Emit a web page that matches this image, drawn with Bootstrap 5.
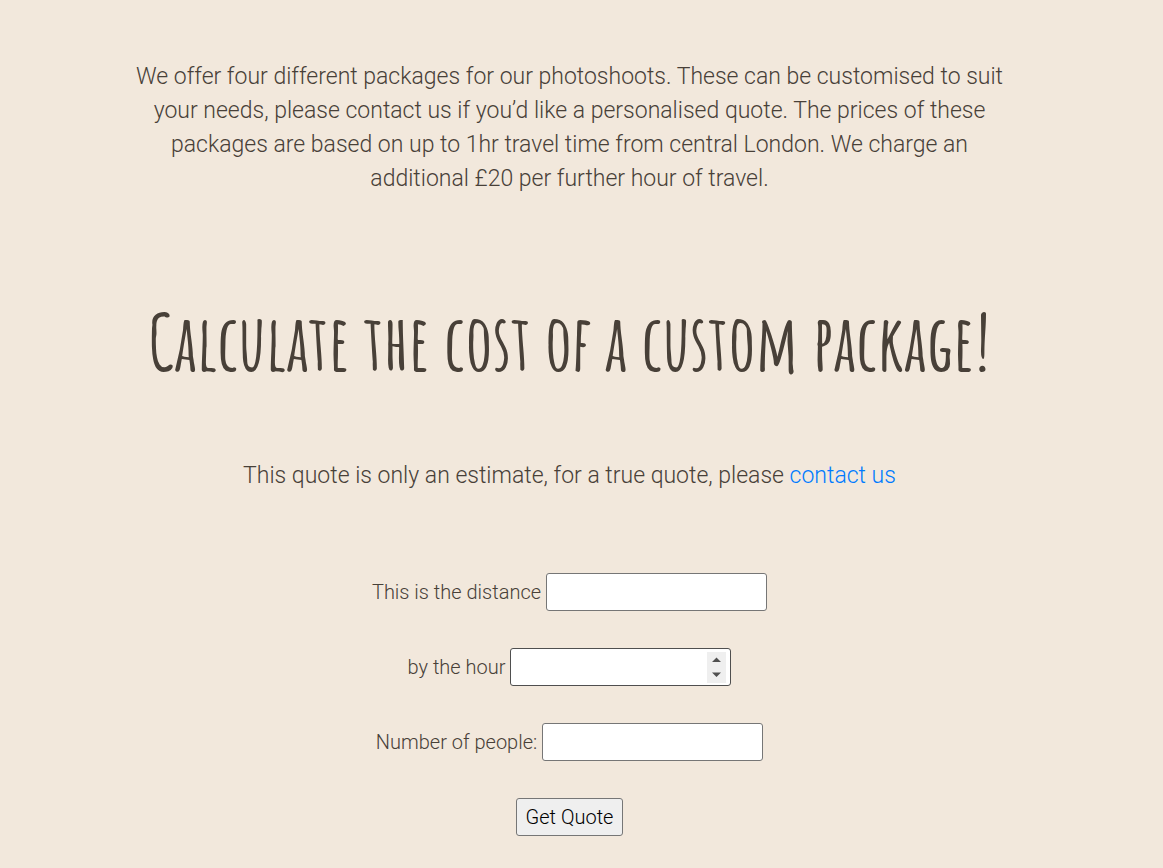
<!DOCTYPE html>
<html lang="en">
<head>
<meta charset="utf-8">
<meta name="viewport" content="width=device-width, initial-scale=1">
<title>Custom packages</title>
<link href="https://cdn.jsdelivr.net/npm/bootstrap@5.3.0/dist/css/bootstrap.min.css" rel="stylesheet">
<style>
body{background:#f2e8dc;color:#484038;font-family:Roboto,"Open Sans",sans-serif;font-weight:300;font-size:20px;line-height:30px}
.page{padding:60px 152px 34px 128px}
.copy{font-size:23px;line-height:34px}
.copy a{color:#007bff;text-decoration:none}
.headline{font-family:"Amatic SC","Liberation Sans Narrow",sans-serif;font-weight:700;font-size:76px;line-height:92px;margin:100px 0 71px}
.quote-form{margin-top:80px;gap:37px}
.form-line{gap:5px}
.field{width:221px;height:38px;border:1px solid #767676;border-radius:3px;background:#fff;padding:2px 4px}
.field[type=number]{border-color:#4f4f4f}
.field::-webkit-inner-spin-button{-webkit-appearance:none;opacity:1;width:19px;height:31px;background:#efefef url("data:image/svg+xml,%3Csvg xmlns='http://www.w3.org/2000/svg' width='19' height='31'%3E%3Cpath d='M5 10L9.5 5.5L14 10ZM5 20.5H14L9.5 25Z' fill='%23505050'/%3E%3C/svg%3E") center no-repeat}
.submit{height:38px;border:1px solid #767676;border-radius:3px;background:#efefef;color:#000;padding:0 9px;font-weight:300}
</style>
</head>
<body>
<main class="page text-center">
<p class="copy mb-0">We offer four different packages for our photoshoots. These can be customised to suit your needs, please contact us if you’d like a personalised quote. The prices of these packages are based on up to 1hr travel time from central London. We charge an additional £20 per further hour of travel.</p>
<h1 class="headline">Calculate the cost of a custom package!</h1>
<p class="copy mb-0">This quote is only an estimate, for a true quote, please <a href="#contact">contact us</a></p>
<form class="quote-form d-flex flex-column align-items-center">
<div class="form-line d-flex align-items-center"><label for="distance">This is the distance</label><input class="field" id="distance" type="text"></div>
<div class="form-line d-flex align-items-center"><label for="hours">by the hour</label><input class="field" id="hours" type="number"></div>
<div class="form-line d-flex align-items-center"><label for="people">Number of people:</label><input class="field" id="people" type="text"></div>
<button class="submit" type="button">Get Quote</button>
</form>
</main>
<script src="https://cdn.jsdelivr.net/npm/bootstrap@5.3.0/dist/js/bootstrap.bundle.min.js"></script>
</body>
</html>
